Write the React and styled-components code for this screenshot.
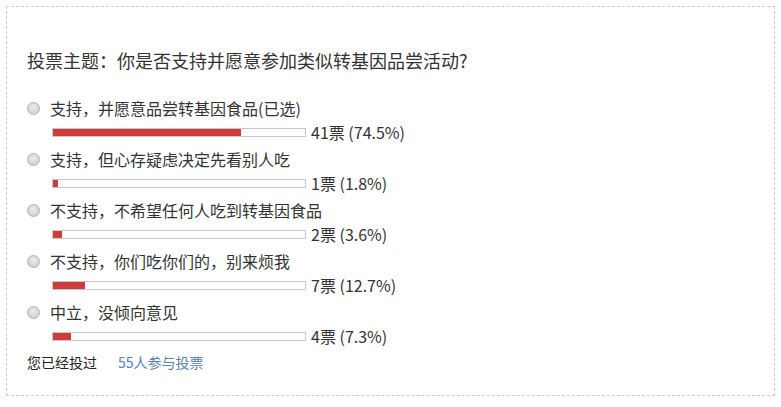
import React from 'react';
import styled, { createGlobalStyle } from 'styled-components';

const GlobalStyle = createGlobalStyle`
  body {
    margin: 0;
    background: #fff;
    font-family: "Microsoft YaHei", "Noto Sans CJK SC", "Noto Sans", sans-serif;
  }
`;

const PollBox = styled.div`
  margin: 6px;
  width: 769px;
  height: 390px;
  box-sizing: border-box;
  border: 1px dashed #c9c9c9;
  padding: 41px 20px 0;
  color: #333;
`;

const Title = styled.h2`
  margin: 0 0 25px;
  font-size: 18px;
  font-weight: normal;
  line-height: 24px;
  color: #333;
`;

const Option = styled.div`
  margin-bottom: 3px;
`;

const Label = styled.label`
  display: flex;
  align-items: center;
  gap: 10px;
  height: 22px;
  font-size: 16px;
  line-height: 22px;
  color: #333;
`;

const Radio = styled.span`
  width: 13px;
  height: 13px;
  box-sizing: border-box;
  border-radius: 50%;
  border: 1px solid #b3b3b3;
  background: radial-gradient(circle at 50% 40%, #ececec 0%, #dadada 50%, #c4c4c4 100%);
  flex-shrink: 0;
`;

const ResultRow = styled.div`
  display: flex;
  align-items: center;
  gap: 5px;
  height: 26px;
  padding-left: 25px;
`;

const Track = styled.div`
  width: 254px;
  height: 9px;
  box-sizing: border-box;
  border: 1px solid #c8c8c8;
  background: #fff;
`;

const Fill = styled.div`
  height: 100%;
  background: #cf3c3c;
`;

const Count = styled.span`
  font-size: 16px;
  line-height: 22px;
  color: #333;
`;

const Footer = styled.div`
  display: flex;
  gap: 21px;
  margin-top: 1px;
  font-size: 14px;
  line-height: 20px;
`;

const Voted = styled.span`
  color: #222;
`;

const Total = styled.a`
  color: #5b80b5;
  text-decoration: none;
`;

const options = [
  { text: '支持，并愿意品尝转基因食品(已选)', votes: 41, pct: 74.5 },
  { text: '支持，但心存疑虑决定先看别人吃', votes: 1, pct: 1.8 },
  { text: '不支持，不希望任何人吃到转基因食品', votes: 2, pct: 3.6 },
  { text: '不支持，你们吃你们的，别来烦我', votes: 7, pct: 12.7 },
  { text: '中立，没倾向意见', votes: 4, pct: 7.3 },
];

export default function App() {
  return (
    <>
      <GlobalStyle />
      <PollBox>
        <Title>投票主题：你是否支持并愿意参加类似转基因品尝活动?</Title>
        {options.map((o) => (
          <Option key={o.text}>
            <Label>
              <Radio />
              {o.text}
            </Label>
            <ResultRow>
              <Track>
                <Fill style={{ width: `${o.pct}%` }} />
              </Track>
              <Count>{o.votes}票 ({o.pct}%)</Count>
            </ResultRow>
          </Option>
        ))}
        <Footer>
          <Voted>您已经投过</Voted>
          <Total href="#">55人参与投票</Total>
        </Footer>
      </PollBox>
    </>
  );
}
